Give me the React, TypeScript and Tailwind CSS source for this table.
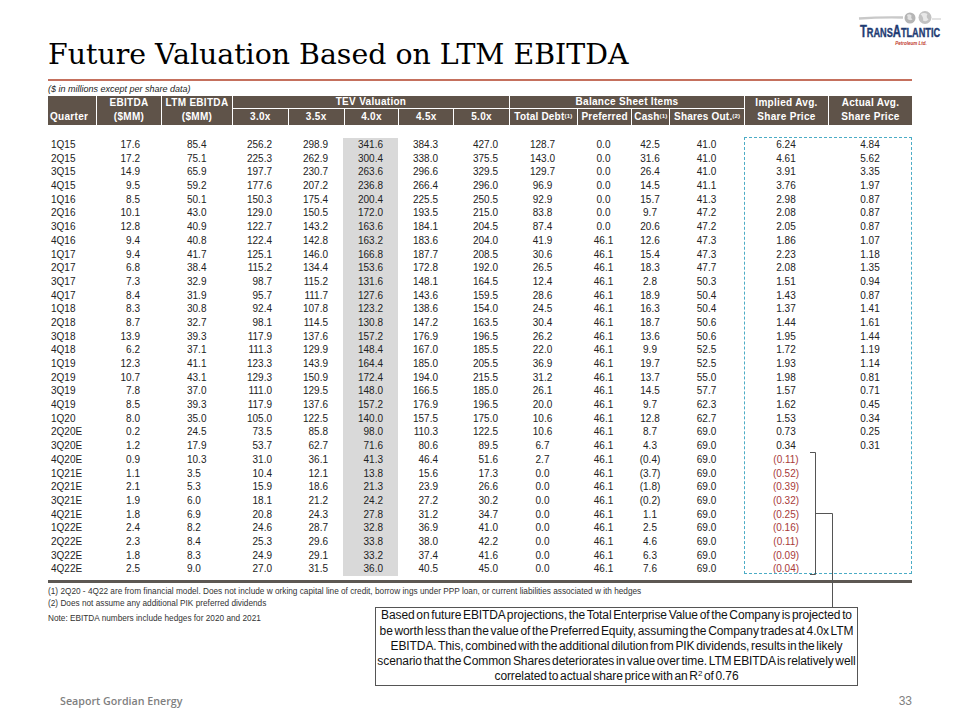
import React from 'react';

// column layout of the valuation table (px widths + text placement)
const CELL = [
  'w-[48px] pl-[3px] text-left',
  'w-[65px] pr-[21px] text-right',
  'w-[71px] pl-[26px] text-left',
  'w-[55px] pr-[15px] text-right',
  'w-[56px] pr-[15px] text-right',
  'w-[55px] pr-[15px] text-right bg-[#d9d9d9]',
  'w-[55px] pr-[15px] text-right',
  'w-[56px] pr-[11px] text-right',
  'w-[67px] text-center',
  'w-[55px] text-center',
  'w-[38px] text-center',
  'w-[75px] text-center',
  'w-[84px] text-center',
  'w-[84px] text-center',
];

const DATA = `
1Q15 17.6 85.4 256.2 298.9 341.6 384.3 427.0 128.7 0.0 42.5 41.0 6.24 4.84
2Q15 17.2 75.1 225.3 262.9 300.4 338.0 375.5 143.0 0.0 31.6 41.0 4.61 5.62
3Q15 14.9 65.9 197.7 230.7 263.6 296.6 329.5 129.7 0.0 26.4 41.0 3.91 3.35
4Q15 9.5 59.2 177.6 207.2 236.8 266.4 296.0 96.9 0.0 14.5 41.1 3.76 1.97
1Q16 8.5 50.1 150.3 175.4 200.4 225.5 250.5 92.9 0.0 15.7 41.3 2.98 0.87
2Q16 10.1 43.0 129.0 150.5 172.0 193.5 215.0 83.8 0.0 9.7 47.2 2.08 0.87
3Q16 12.8 40.9 122.7 143.2 163.6 184.1 204.5 87.4 0.0 20.6 47.2 2.05 0.87
4Q16 9.4 40.8 122.4 142.8 163.2 183.6 204.0 41.9 46.1 12.6 47.3 1.86 1.07
1Q17 9.4 41.7 125.1 146.0 166.8 187.7 208.5 30.6 46.1 15.4 47.3 2.23 1.18
2Q17 6.8 38.4 115.2 134.4 153.6 172.8 192.0 26.5 46.1 18.3 47.7 2.08 1.35
3Q17 7.3 32.9 98.7 115.2 131.6 148.1 164.5 12.4 46.1 2.8 50.3 1.51 0.94
4Q17 8.4 31.9 95.7 111.7 127.6 143.6 159.5 28.6 46.1 18.9 50.4 1.43 0.87
1Q18 8.3 30.8 92.4 107.8 123.2 138.6 154.0 24.5 46.1 16.3 50.4 1.37 1.41
2Q18 8.7 32.7 98.1 114.5 130.8 147.2 163.5 30.4 46.1 18.7 50.6 1.44 1.61
3Q18 13.9 39.3 117.9 137.6 157.2 176.9 196.5 26.2 46.1 13.6 50.6 1.95 1.44
4Q18 6.2 37.1 111.3 129.9 148.4 167.0 185.5 22.0 46.1 9.9 52.5 1.72 1.19
1Q19 12.3 41.1 123.3 143.9 164.4 185.0 205.5 36.9 46.1 19.7 52.5 1.93 1.14
2Q19 10.7 43.1 129.3 150.9 172.4 194.0 215.5 31.2 46.1 13.7 55.0 1.98 0.81
3Q19 7.8 37.0 111.0 129.5 148.0 166.5 185.0 26.1 46.1 14.5 57.7 1.57 0.71
4Q19 8.5 39.3 117.9 137.6 157.2 176.9 196.5 20.0 46.1 9.7 62.3 1.62 0.45
1Q20 8.0 35.0 105.0 122.5 140.0 157.5 175.0 10.6 46.1 12.8 62.7 1.53 0.34
2Q20E 0.2 24.5 73.5 85.8 98.0 110.3 122.5 10.6 46.1 8.7 69.0 0.73 0.25
3Q20E 1.2 17.9 53.7 62.7 71.6 80.6 89.5 6.7 46.1 4.3 69.0 0.34 0.31
4Q20E 0.9 10.3 31.0 36.1 41.3 46.4 51.6 2.7 46.1 (0.4) 69.0 (0.11)
1Q21E 1.1 3.5 10.4 12.1 13.8 15.6 17.3 0.0 46.1 (3.7) 69.0 (0.52)
2Q21E 2.1 5.3 15.9 18.6 21.3 23.9 26.6 0.0 46.1 (1.8) 69.0 (0.39)
3Q21E 1.9 6.0 18.1 21.2 24.2 27.2 30.2 0.0 46.1 (0.2) 69.0 (0.32)
4Q21E 1.8 6.9 20.8 24.3 27.8 31.2 34.7 0.0 46.1 1.1 69.0 (0.25)
1Q22E 2.4 8.2 24.6 28.7 32.8 36.9 41.0 0.0 46.1 2.5 69.0 (0.16)
2Q22E 2.3 8.4 25.3 29.6 33.8 38.0 42.2 0.0 46.1 4.6 69.0 (0.11)
3Q22E 1.8 8.3 24.9 29.1 33.2 37.4 41.6 0.0 46.1 6.3 69.0 (0.09)
4Q22E 2.5 9.0 27.0 31.5 36.0 40.5 45.0 0.0 46.1 7.6 69.0 (0.04)
`
  .trim()
  .split('\n')
  .map((line) => line.trim().split(/\s+/));

const Sup = ({ children }: { children: React.ReactNode }) => (
  <sup className="text-[6px] relative top-[-1px] align-super">{children}</sup>
);

function Logo() {
  return (
    <div className="flex flex-col items-center w-[84px] mr-[-30px] mt-[11px]">
      <svg width="84" height="13" viewBox="0 0 84 13">
        <path d="M1 7.5 Q22 6 45 6.5" stroke="#c9c9c9" strokeWidth="2.5" fill="none" />
        <circle cx="52" cy="7" r="5.5" fill="#b5b5b5" />
        <path d="M49 4 q2.5 -1.5 4.5 0.5 q-1 2 1 4 q-3 1.5 -5 -0.5 q0.5 -2 -0.5 -4z" fill="#e2e2e2" />
        <circle cx="67" cy="6.5" r="6.5" fill="#c2c2c2" />
        <path d="M62.5 3 q3.5 -2 7 0 q-2 3 1 5.5 q-2.5 3 -5.5 1 q1 -3 -2.5 -6.5z" fill="#e8e8e8" />
        <path d="M74 8 L83 8" stroke="#d8d8d8" strokeWidth="1.5" />
      </svg>
      <div className="mt-[-1px] font-['Liberation_Sans',Arial,sans-serif] font-bold text-[#1f3c73] leading-[16px] scale-x-[0.68] whitespace-nowrap [-webkit-text-stroke:0.4px_#1f3c73]">
        <span className="text-[16.5px]">T</span>
        <span className="text-[13.5px]">RANS</span>
        <span className="text-[16.5px]">A</span>
        <span className="text-[13.5px]">TLANTIC</span>
      </div>
      <div className="text-[4.5px] leading-none font-bold italic text-[#c0392b] ml-[22px] mt-[1px]">
        Petroleum Ltd.
      </div>
    </div>
  );
}

function HeaderTable() {
  const cell = 'flex items-center justify-center';
  return (
    <div className="flex h-[29px] bg-[#5f5349] text-white font-bold text-[10px] tracking-[0.3px] leading-none">
      <div className="w-[48px] flex flex-col">
        <div className="h-[13px]" />
        <div className="h-[16px] flex items-center pl-[2px]">Quarter</div>
      </div>
      <div className="w-[65px] flex flex-col border-l border-white">
        <div className={`h-[13px] ${cell}`}>EBITDA</div>
        <div className={`h-[16px] ${cell}`}>($MM)</div>
      </div>
      <div className="w-[71px] flex flex-col border-l border-white">
        <div className={`h-[13px] ${cell}`}>LTM EBITDA</div>
        <div className={`h-[16px] ${cell}`}>($MM)</div>
      </div>
      <div className="w-[277px] flex flex-col border-l border-white">
        <div className={`h-[13px] ${cell} border-b border-white`}>TEV Valuation</div>
        <div className="h-[16px] flex">
          <div className={`w-[55px] ${cell}`}>3.0x</div>
          <div className={`w-[56px] ${cell} border-l border-white`}>3.5x</div>
          <div className={`w-[55px] ${cell} border-l border-white`}>4.0x</div>
          <div className={`w-[55px] ${cell} border-l border-white`}>4.5x</div>
          <div className={`w-[56px] ${cell} border-l border-white`}>5.0x</div>
        </div>
      </div>
      <div className="w-[235px] flex flex-col border-l border-white">
        <div className={`h-[13px] ${cell} border-b border-white`}>Balance Sheet Items</div>
        <div className="h-[16px] flex tracking-[0.2px]">
          <div className={`w-[67px] ${cell}`}>
            Total Debt<Sup>(1)</Sup>
          </div>
          <div className={`w-[55px] ${cell} border-l border-white`}>Preferred</div>
          <div className={`w-[38px] ${cell} border-l border-white`}>
            Cash<Sup>(1)</Sup>
          </div>
          <div className={`w-[75px] ${cell} border-l border-white`}>
            Shares Out.<Sup>(2)</Sup>
          </div>
        </div>
      </div>
      <div className="w-[84px] flex flex-col border-l border-white">
        <div className={`h-[13px] ${cell}`}>Implied Avg.</div>
        <div className={`h-[16px] ${cell}`}>Share Price</div>
      </div>
      <div className="w-[84px] flex flex-col border-l border-white">
        <div className={`h-[13px] ${cell}`}>Actual Avg.</div>
        <div className={`h-[16px] ${cell}`}>Share Price</div>
      </div>
    </div>
  );
}

export default function App() {
  return (
    <div className="relative w-[960px] h-[720px] bg-white overflow-hidden font-['Liberation_Sans',Arial,sans-serif] text-[#222]">
      <div className="px-[48px]">
        {/* title + logo */}
        <div className="flex justify-between items-start h-[79px]">
          <h1 className="pt-[41px] font-['DejaVu_Serif',Georgia,serif] text-[28.4px] leading-[28px] text-black whitespace-nowrap">
            Future Valuation Based on LTM EBITDA
          </h1>
          <Logo />
        </div>
        <div className="h-[2px] bg-[#c5705d]" />

        <div className="mt-[3px] text-[9px] leading-[11px] italic">($ in millions except per share data)</div>

        <div className="mt-[1px]">
          <HeaderTable />
        </div>

        {/* data rows */}
        <div className="relative mt-[13px] text-[10px]">
          {DATA.map((row) => (
            <div key={row[0]} className="flex h-[13.69px] leading-[13.69px] whitespace-nowrap">
              {CELL.map((cls, i) => (
                <div
                  key={i}
                  className={`${cls} ${i === 12 && row[i]?.startsWith('(') ? 'text-[#a83a3a]' : ''}`}
                >
                  {row[i] ?? ''}
                </div>
              ))}
            </div>
          ))}
          <div className="absolute left-[696px] top-[-1px] bottom-[2px] w-[168px] border border-dashed border-[#4bacc6]" />
        </div>

        <div className="mt-[4px] h-[3px] bg-[#5d5853]" />

        {/* footnotes + commentary */}
        <div className="mt-[3px] text-[8.25px] leading-[12px] text-[#333] whitespace-nowrap">
          (1) 2Q20 - 4Q22 are from financial model. Does not include w orking capital line of credit, borrow ings under PPP
          loan, or current liabilities associated w ith hedges
        </div>
        <div className="flex items-start">
          <div className="w-[327px] text-[8.25px] leading-[12px] text-[#333]">
            <div>(2) Does not assume any additional PIK preferred dividends</div>
            <div className="mt-[3px]">Note: EBITDA numbers include hedges for 2020 and 2021</div>
          </div>
          <div className="mt-[9px] w-[483px] h-[79px] border border-[#555] flex flex-col justify-center text-center text-[12px] leading-[15.3px] tracking-[-0.1px] [word-spacing:-1.5px] text-[#111] whitespace-nowrap">
            <div>Based on future EBITDA projections, the Total Enterprise Value of the Company is projected to</div>
            <div>be worth less than the value of the Preferred Equity, assuming the Company trades at 4.0x LTM</div>
            <div>EBITDA. This, combined with the additional dilution from PIK dividends, results in the likely</div>
            <div>scenario that the Common Shares deteriorates in value over time. LTM EBITDA is relatively well</div>
            <div>
              correlated to actual share price with an R<sup className="text-[8px]">2</sup> of 0.76
            </div>
          </div>
        </div>

        {/* footer */}
        <div className="mt-[6px] flex justify-between items-center">
          <div className="pl-[12px] font-['Open_Sans',sans-serif] font-semibold text-[10.7px] text-[#7f7f7f]">
            Seaport Gordian Energy
          </div>
          <div className="text-[12px] text-[#808080]">33</div>
        </div>
      </div>

      {/* bracket connecting the negative implied prices to the commentary */}
      <svg className="absolute left-[805px] top-[448px]" width="35" height="162" viewBox="0 0 35 162">
        <path d="M5 4.5 H10.5 V126.5 H5" fill="none" stroke="#555" strokeWidth="1" />
        <path d="M10.5 65.5 H27.5 V160" fill="none" stroke="#555" strokeWidth="1" />
      </svg>
    </div>
  );
}
